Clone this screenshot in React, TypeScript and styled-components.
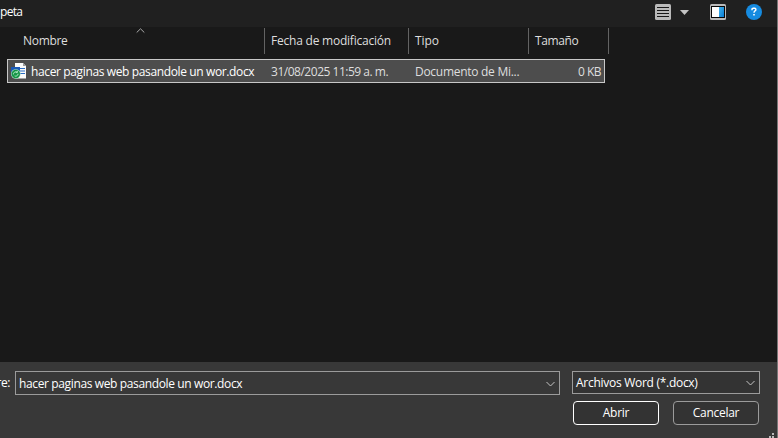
import React from "react";
import styled, { createGlobalStyle } from "styled-components";

const GlobalStyle = createGlobalStyle`
  * { box-sizing: border-box; }
  body { margin: 0; overflow: hidden; background: #191919; }
`;

const Dialog = styled.div`
  width: 778px;
  height: 438px;
  display: flex;
  flex-direction: column;
  border-right: 1px solid #777;
  background: #191919;
  color: #fff;
  font: 12px/16px "Open Sans", "Noto Sans", sans-serif;
  white-space: nowrap;
  overflow: hidden;
`;

const Label = styled.span<{ $track?: number }>`
  letter-spacing: ${(p) => p.$track ?? 0}px;
`;

const Toolbar = styled.header`
  height: 27px;
  flex: none;
  display: flex;
  align-items: flex-start;
  padding: 4px 15px 0 0;
  background: #202020;
`;

const ToolbarIcons = styled.div`
  display: flex;
  margin-left: auto;
  svg { display: block; }
`;

const ViewButton = styled.div`
  display: flex;
  gap: 9px;
  margin-right: 21px;
`;

const PreviewButton = styled.div`
  margin-right: 20px;
`;

const FileArea = styled.main`
  flex: 1;
  display: flex;
  flex-direction: column;
`;

const HeaderRow = styled.div`
  display: grid;
  grid-template-columns: 265px 144px 120px 80px;
  height: 26px;
  margin-top: 1px;
  color: #dedede;
`;

const HeaderCell = styled.div<{ $indent?: number }>`
  position: relative;
  border-right: 1px solid #636363;
  padding: 5px 0 0 ${(p) => p.$indent ?? 6}px;
`;

const SortMark = styled.svg`
  position: absolute;
  left: 136px;
  top: 0;
`;

const FileRow = styled.div`
  display: grid;
  grid-template-columns: 23px 240px 144px 120px 1fr;
  align-items: center;
  width: 598px;
  height: 24px;
  margin: 5px 0 0 7px;
  padding: 1px 3px 0 0;
  border: 1px solid #c8c8c8;
  background: #4d4d4d;
  color: #dedede;
  svg { display: block; margin: -1px 0 0 3px; }
`;

const FileName = styled.div`
  color: #fff;
`;

const SizeCell = styled.div`
  text-align: right;
`;

const Footer = styled.footer`
  height: 76px;
  flex: none;
  position: relative;
  display: flex;
  align-items: flex-start;
  padding-top: 9px;
  background: #383838;
`;

const FieldCaption = styled.div`
  width: 15px;
  padding-top: 4px;
  display: flex;
  justify-content: flex-end;
  padding-right: 5px;
`;

const Combo = styled.div<{ $width: number; $height: number; $fill: string }>`
  width: ${(p) => p.$width}px;
  height: ${(p) => p.$height}px;
  display: flex;
  align-items: center;
  justify-content: space-between;
  padding: 1px 3px 0 3px;
  border: 1px solid #9b9b9b;
  background: ${(p) => p.$fill};
`;

const Actions = styled.div`
  margin-left: 12px;
`;

const ButtonRow = styled.div`
  display: flex;
  gap: 14px;
  padding: 7px 0 0 1px;
`;

const Button = styled.button<{ $primary?: boolean }>`
  width: 86px;
  height: 24px;
  padding: 0 0 1px;
  border: 1px solid ${(p) => (p.$primary ? "#fff" : "#9b9b9b")};
  border-radius: 4px;
  background: #333;
  color: #fff;
  font: inherit;
`;

const Grip = styled.svg`
  position: absolute;
  right: 3px;
  bottom: 0;
`;

const Chevron = () => (
  <svg width="11" height="8" viewBox="0 0 11 8" fill="none" stroke="#c4c4c4">
    <path d="M1.5 2 5.5 6 9.5 2" />
  </svg>
);

const ListIcon = () => (
  <svg width="16" height="16" viewBox="0 0 16 16">
    <rect width="16" height="16" rx="1.5" fill="#b9b9b9" />
    <path d="M2 3.5h12M2 6.5h12M2 9.5h12M2 12.5h12" stroke="#171717" />
  </svg>
);

const DropArrow = () => (
  <svg width="9" height="16" viewBox="0 0 9 16">
    <path d="M0 6h9L4.5 11z" fill="#c4c4c4" />
  </svg>
);

const PreviewIcon = () => (
  <svg width="16" height="16" viewBox="0 0 16 16">
    <defs>
      <linearGradient id="pane" x2="1" y2="1">
        <stop stopColor="#42b5ee" />
        <stop offset="1" stopColor="#087bd3" />
      </linearGradient>
    </defs>
    <rect width="16" height="16" rx="1.5" fill="#b9b9b9" />
    <path d="M1 2h14v12H1z" fill="#080808" />
    <path d="M2 3h7v10H2z" fill="#fff" />
    <path d="M9 3h5v10H9z" fill="url(#pane)" />
  </svg>
);

const HelpIcon = () => (
  <svg width="16" height="16" viewBox="0 0 16 16">
    <circle cx="8" cy="8" r="8" fill="#168be0" />
    <path d="M6 6.2V5.4Q6 4.3 7.2 4.3h1.5q1.2 0 1.2 1.1 0 .9-.9 1.5T8 8.8" fill="none" stroke="#fff" strokeWidth="1.4" />
    <path d="M7.2 10h1.6v1.6H7.2z" fill="#fff" />
  </svg>
);

const WordFileIcon = () => (
  <svg width="16" height="16" viewBox="0 0 16 16">
    <path d="M4 0h8l3 3v12.5H4z" fill="#fafafa" />
    <path d="M12 0v3h3z" fill="#999" />
    <path d="M9 5.5h5M9 8h5M9 10.5h5" stroke="#2a6cc4" />
    <rect y="4" width="9" height="9" fill="#1959b7" />
    <circle cx="4.8" cy="11" r="4.8" fill="#a9dcbd" />
    <circle cx="4.8" cy="11" r="4.2" fill="#159447" />
    <path d="M2.5 11.4A2.4 2.4 0 0 1 6 9M7.1 10.8a2.4 2.4 0 0 1-3.5 2.1M6.4 7.8v1.8H4.6" fill="none" stroke="#b9efcb" strokeWidth=".9" />
  </svg>
);

export default function App() {
  return (
    <>
      <GlobalStyle />
      <Dialog>
        <Toolbar>
          <Label $track={-0.7}>peta</Label>
          <ToolbarIcons>
            <ViewButton><ListIcon /><DropArrow /></ViewButton>
            <PreviewButton><PreviewIcon /></PreviewButton>
            <HelpIcon />
          </ToolbarIcons>
        </Toolbar>
        <FileArea>
          <HeaderRow>
            <HeaderCell $indent={23}>
              <Label $track={-0.3}>Nombre</Label>
              <SortMark width="9" height="6" viewBox="0 0 9 6" fill="none" stroke="#aaa">
                <path d="M.7 4.5 4.5.8l3.8 3.7" />
              </SortMark>
            </HeaderCell>
            <HeaderCell><Label $track={-0.22}>Fecha de modificación</Label></HeaderCell>
            <HeaderCell><Label $track={-0.1}>Tipo</Label></HeaderCell>
            <HeaderCell><Label $track={-0.4}>Tamaño</Label></HeaderCell>
          </HeaderRow>
          <FileRow>
            <WordFileIcon />
            <FileName><Label $track={-0.37}>hacer paginas web pasandole un wor.docx</Label></FileName>
            <Label $track={-0.48}>31/08/2025 11:59 a. m.</Label>
            <Label $track={-0.28}>Documento de Mi...</Label>
            <SizeCell><Label $track={-0.5}>0 KB</Label></SizeCell>
          </FileRow>
        </FileArea>
        <Footer>
          <FieldCaption><Label $track={-0.4}>re:</Label></FieldCaption>
          <Combo $width={545} $height={24} $fill="#383838">
            <Label $track={-0.37}>hacer paginas web pasandole un wor.docx</Label>
            <Chevron />
          </Combo>
          <Actions>
            <Combo $width={188} $height={23} $fill="#333">
              <Label $track={-0.28}>Archivos Word (*.docx)</Label>
              <Chevron />
            </Combo>
            <ButtonRow>
              <Button $primary><Label $track={-0.25}>Abrir</Label></Button>
              <Button><Label $track={-0.3}>Cancelar</Label></Button>
            </ButtonRow>
          </Actions>
          <Grip width="5" height="5" viewBox="0 0 5 5" fill="#bbb">
            <path d="M3 0h2v2H3zM0 3h2v2H0zM3 3h2v2H3z" />
          </Grip>
        </Footer>
      </Dialog>
    </>
  );
}
